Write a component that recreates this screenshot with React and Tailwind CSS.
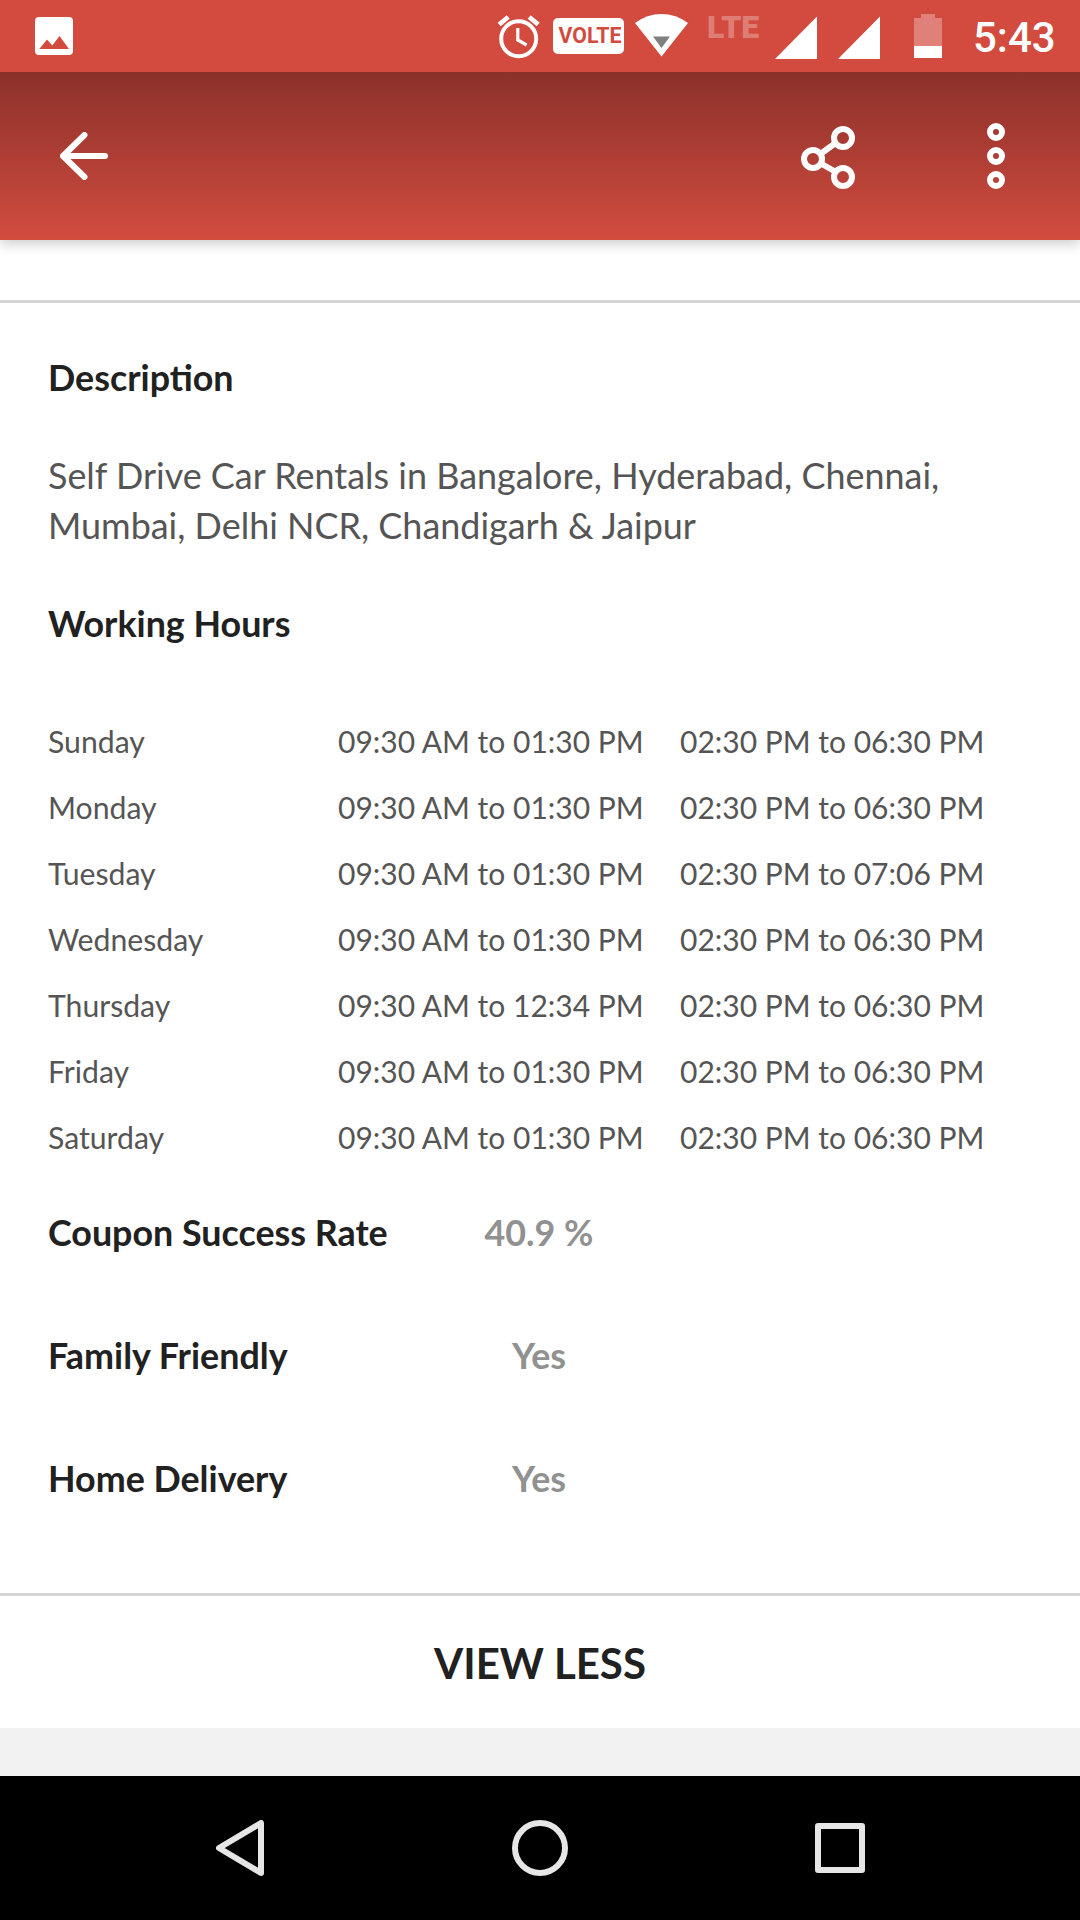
const hours = [
  ["Sunday", "09:30 AM to 01:30 PM", "02:30 PM to 06:30 PM"],
  ["Monday", "09:30 AM to 01:30 PM", "02:30 PM to 06:30 PM"],
  ["Tuesday", "09:30 AM to 01:30 PM", "02:30 PM to 07:06 PM"],
  ["Wednesday", "09:30 AM to 01:30 PM", "02:30 PM to 06:30 PM"],
  ["Thursday", "09:30 AM to 12:34 PM", "02:30 PM to 06:30 PM"],
  ["Friday", "09:30 AM to 01:30 PM", "02:30 PM to 06:30 PM"],
  ["Saturday", "09:30 AM to 01:30 PM", "02:30 PM to 06:30 PM"],
];

const facts = [
  ["Coupon Success Rate", "40.9 %"],
  ["Family Friendly", "Yes"],
  ["Home Delivery", "Yes"],
];

function Signal({ className }) {
  return (
    <svg className={className} width="42" height="72" viewBox="0 0 42 72" fill="#fff">
      <path d="M42 16.5V59H0z" />
    </svg>
  );
}

function StatusBar() {
  return (
    <div className="relative z-10 flex h-[72px] items-start bg-[#d24b3e] pl-[35px] font-['Roboto',sans-serif] text-white">
      <svg width="38" height="72" viewBox="0 0 38 72">
        <rect y="17" width="38" height="38" rx="4" fill="#fff" />
        <path d="M4.3 49 12 39.5l5.3 6L24.5 36 34 49z" fill="#d24b3e" />
      </svg>
      <svg className="ml-[423px]" width="46" height="72" viewBox="0 0 46 72" fill="none" stroke="#fff">
        <circle cx="22.7" cy="38.7" r="17.5" strokeWidth="4" />
        <path d="M21.8 28v12l8.8 5" strokeWidth="3.2" />
        <path d="M3.2 24.6 12.2 17M33.2 17l9 7.6" strokeWidth="4.6" />
      </svg>
      <div className="mt-[18px] ml-[11px] flex h-9 w-[71px] items-center justify-center rounded-[5px] bg-white pl-[3px] text-[21.3px] leading-none font-bold text-[#d24b3e]">
        VOLTE
      </div>
      <svg className="ml-[11px]" width="53" height="72" viewBox="0 0 53 72">
        <path d="M0 23Q12 14 26.5 14T53 23L26.5 56.5z" fill="#fff" />
        <path d="M18 36.5h17L26.500 48z" fill="#808080" />
      </svg>
      <div className="mt-[11px] ml-[19px] w-[68px] text-[32px] leading-8 font-black text-white/30">LTE</div>
      <Signal />
      <Signal className="ml-[21px]" />
      <svg className="ml-[34px]" width="28" height="72" viewBox="0 0 28 72" fill="#fff">
        <path d="M7 14h14v4h7v28H0V18h7z" fillOpacity=".3" />
        <path d="M0 46h28v12H0z" />
      </svg>
      <div className="ml-[31px] text-[42px] leading-[75px] font-medium">5:43</div>
    </div>
  );
}

function AppBar() {
  return (
    <div className="relative flex h-[168px] items-center justify-between bg-linear-to-b from-[#8b312a] to-[#d34c40] px-[60px] shadow-[0_4px_12px_rgba(0,0,0,0.2)]">
      <svg width="48" height="48" viewBox="0 0 48 48" fill="none" stroke="#fff" strokeWidth="6" strokeLinecap="round" strokeLinejoin="round">
        <path d="M24.500 3 3 24l21.500 21M3 24h42" />
      </svg>
      <div className="flex items-center gap-[132px] pr-[15px]">
        <svg width="54" height="66" viewBox="0 0 54 66" fill="none" stroke="#fff" strokeWidth="6">
          <circle cx="42" cy="15" r="9" />
          <circle cx="12" cy="36" r="9" />
          <circle cx="42" cy="54" r="9" />
          <path d="m19.500 31 15-11M20 40.500l14 8" />
        </svg>
        <svg width="18" height="66" viewBox="0 0 18 66" fill="none" stroke="#fff" strokeWidth="6">
          <circle cx="9" cy="9" r="6" />
          <circle cx="9" cy="33" r="6" />
          <circle cx="9" cy="57" r="6" />
        </svg>
      </div>
    </div>
  );
}

function NavBar() {
  return (
    <div className="flex h-36 items-center justify-between bg-black pr-[215px] pl-[216px]">
      <svg width="48" height="56" viewBox="0 0 48 56" fill="none" stroke="#e6e6e6" strokeWidth="6" strokeLinejoin="round">
        <path d="M45 3v50L3 28z" />
      </svg>
      <svg width="56" height="56" viewBox="0 0 56 56" fill="none" stroke="#e6e6e6" strokeWidth="6">
        <circle cx="28" cy="28" r="25" />
      </svg>
      <svg width="50" height="50" viewBox="0 0 50 50" fill="none" stroke="#e6e6e6" strokeWidth="6" strokeLinejoin="round">
        <path d="M3 3h44v44H3z" />
      </svg>
    </div>
  );
}

export default function App() {
  return (
    <div className="flex h-[1920px] w-[1080px] flex-col overflow-hidden bg-white font-['Lato',sans-serif] text-[#212121]">
      <StatusBar />
      <AppBar />
      <div className="mt-[60px] h-[3px] bg-[#d4d4d4]" />
      <main className="flex h-[1290px] flex-col px-12 pt-[50px] text-[35.85px] leading-[50px]">
        <h2 className="font-bold">Description</h2>
        <p className="mt-12 text-[35.95px] text-[#555]">
          Self Drive Car Rentals in Bangalore, Hyderabad, Chennai,
          <br />
          Mumbai, Delhi NCR, Chandigarh &amp; Jaipur
        </p>
        <h2 className="mt-12 font-bold">Working Hours</h2>
        <div className="mt-[59px] text-[30px] leading-[66px] text-[#555]">
          {hours.map(([day, morning, evening]) => (
            <div key={day} className="grid grid-cols-[290px_342px_1fr] whitespace-nowrap">
              <span className="text-[30.2px]">{day}</span>
              <span>{morning}</span>
              <span>{evening}</span>
            </div>
          ))}
        </div>
        <div className="mt-[38px] flex flex-col gap-[73px] font-bold">
          {facts.map(([label, value]) => (
            <div key={label} className="grid grid-cols-[386px_210px] whitespace-nowrap">
              <span>{label}</span>
              <span className="text-center text-[#919191]">{value}</span>
            </div>
          ))}
        </div>
      </main>
      <div className="h-[3px] bg-[#d4d4d4]" />
      <button className="h-[132px] pt-0.5 text-[42px] font-bold">VIEW LESS</button>
      <div className="h-12 bg-[#f2f2f2]" />
      <NavBar />
    </div>
  );
}
